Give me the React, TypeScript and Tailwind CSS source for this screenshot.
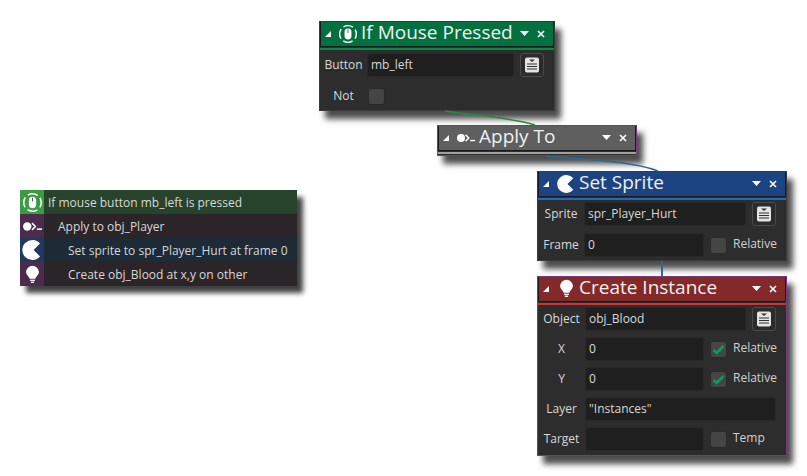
import React from 'react';

const MouseIcon = ({ size = 20 }: { size?: number }) => (
    <svg width={size} height={size} viewBox="0 0 22 22" fill="none" className="shrink-0">
        <circle cx="11" cy="11" r="9.2" stroke="white" strokeWidth="1.6" strokeDasharray="10.9 3.55" strokeDashoffset="5.45" />
        <rect x="7.2" y="5" width="7.6" height="12" rx="3.8" fill="white" />
        <rect x="10.5" y="6" width="1" height="4" fill="#555" />
    </svg>
);

const ApplyIcon = ({ size = 20 }: { size?: number }) => (
    <svg width={size} height={size} viewBox="0 0 22 22" fill="none" className="shrink-0">
        <circle cx="5.5" cy="11" r="4.4" fill="white" />
        <path d="M10.5 7.5 L14 11 L10.5 14.5" stroke="white" strokeWidth="1.6" />
        <rect x="15.5" y="13" width="5.5" height="1.6" fill="white" />
    </svg>
);

const PacIcon = ({ size = 20 }: { size?: number }) => (
    <svg width={size} height={size} viewBox="0 0 22 22" className="shrink-0">
        <path d="M19 4.6 A10 10 0 1 0 19 17.4 L12.6 11 Z" fill="white" />
    </svg>
);

const BulbIcon = ({ size = 20 }: { size?: number }) => (
    <svg width={size} height={size} viewBox="0 0 22 22" className="shrink-0">
        <path d="M11 1 A7.4 7.4 0 0 1 18.4 8.4 C18.4 11.4 15.2 13 14.2 16 L7.8 16 C6.8 13 3.6 11.4 3.6 8.4 A7.4 7.4 0 0 1 11 1 Z" fill="white" />
        <rect x="8.2" y="17" width="5.6" height="1.4" fill="white" />
        <rect x="9" y="19" width="4" height="1.8" rx="0.9" fill="white" />
    </svg>
);

const ListIcon = () => (
    <svg width="16" height="16" viewBox="0 0 16 16">
        <rect x="1" y="0.5" width="14" height="15" rx="2" fill="#e4e4e4" />
        <path d="M5 2.5 H11 L8 5 Z" fill="#333" />
        <rect x="3" y="6.5" width="10" height="1" fill="#333" />
        <rect x="3" y="9" width="10" height="1" fill="#333" />
        <rect x="3" y="11.5" width="10" height="1" fill="#333" />
    </svg>
);

const Input = ({ value = '', className = '' }: { value?: string; className?: string }) => (
    <div className={`h-6 flex-1 bg-[#1f1f1f] border border-[#282828] rounded-[3px] pl-[3px] text-[12px] leading-[22px] text-[#d8d8d8] ${className}`}>{value}</div>
);

const ListButton = () => (
    <div className="w-6 h-6 ml-1.5 shrink-0 rounded-[3px] border border-[#4a4a4a] bg-[#2b2b2b] flex items-center justify-center"><ListIcon /></div>
);

const Check = ({ on = false }: { on?: boolean }) => (
    <div className="w-[17px] h-[17px] shrink-0 rounded-[3px] border border-[#2a2a2a] bg-[#454545] flex items-center justify-center">
        {on && (
            <svg width="13" height="11" viewBox="0 0 13 11" fill="none">
                <path d="M1.5 6 L4.8 9 L11.5 2" stroke="#0c9c5c" strokeWidth="2.6" />
            </svg>
        )}
    </div>
);

const Label = ({ children, className = 'w-[46px]' }: { children: React.ReactNode; className?: string }) => (
    <div className={`text-[12px] text-center text-[#d8d8d8] shrink-0 whitespace-nowrap ${className}`}>{children}</div>
);

const CheckField = ({ on, text }: { on?: boolean; text: string }) => (
    <div className="flex items-center ml-1.5 w-[66px] shrink-0">
        <Check on={on} />
        <span className="ml-1.5 text-[12px] text-[#d0d0d0] -mt-[3px]">{text}</span>
    </div>
);

const NodeHeader = ({ icon, title, bg, strip }: { icon: React.ReactNode; title: string; bg: string; strip: string }) => (
    <div>
        <div className={`h-[25px] flex items-center pb-px border-x border-b border-[#1a1a1a] ${bg}`}>
            <svg width="8" height="8" viewBox="0 0 8 8" className="ml-[3px] mr-1.5 shrink-0"><path d="M7 1 V7 H1 Z" fill="white" /></svg>
            <div className="w-5 flex items-center justify-center shrink-0">{icon}</div>
            <span className="ml-[3px] -mt-[3px] text-[19px] leading-6 text-[#f0f0f0] whitespace-nowrap">{title}</span>
            <div className="ml-auto flex items-center pr-2">
                <svg width="9" height="5" viewBox="0 0 9 5"><path d="M0 0 H9 L4.5 5 Z" fill="white" /></svg>
                <svg width="8" height="8" viewBox="0 0 8 8" className="ml-2"><path d="M1 1 L7 7 M7 1 L1 7" stroke="white" strokeWidth="1.6" /></svg>
            </div>
        </div>
        <div className={`h-[2px] mt-px ${strip}`} />
    </div>
);

const Node = ({ className, children }: { className: string; children: React.ReactNode }) => (
    <div className={`absolute bg-[#2d2d2d] border shadow-[6px_8px_6px_rgba(0,0,0,0.7)] ${className}`}>{children}</div>
);

const rows = [
    { icon: <MouseIcon size={21} />, iconBg: 'bg-[#3c9a42]', bg: 'bg-[#27432b]', text: 'If mouse button mb_left is pressed', pad: 'pl-1' },
    { icon: <ApplyIcon size={21} />, iconBg: 'bg-[#4b2c4c]', bg: 'bg-[#2b2429]', text: 'Apply to obj_Player', pad: 'pl-3.5' },
    { icon: <PacIcon size={22} />, iconBg: 'bg-[#1f3a5c]', bg: 'bg-[#1e2a36]', text: 'Set sprite to spr_Player_Hurt at frame 0', pad: 'pl-6' },
    { icon: <BulbIcon size={19} />, iconBg: 'bg-[#4b2c4c]', bg: 'bg-[#2b2429]', text: 'Create obj_Blood at x,y on other', pad: 'pl-6' },
];

export default function App() {
    return (
        <div className="relative w-[807px] h-[476px] bg-white overflow-hidden" style={{ fontFamily: '"Open Sans", "Noto Sans", sans-serif' }}>
            {/* action summary */}
            <div className="absolute left-5 top-[190px] w-[277px] shadow-[6px_7px_5px_rgba(0,0,0,0.75)]">
                {rows.map((r) => (
                    <div key={r.text} className={`h-6 flex items-center ${r.bg}`}>
                        <div className={`w-6 h-6 flex items-center justify-center shrink-0 ${r.iconBg}`}>{r.icon}</div>
                        <span className={`text-[12px] pt-px text-[#d8d8d8] whitespace-nowrap ${r.pad}`}>{r.text}</span>
                    </div>
                ))}
            </div>

            <Node className="left-[319px] top-[21px] w-[236px] h-[90px] border-[#3a3a3a]">
                <NodeHeader icon={<MouseIcon />} title="If Mouse Pressed" bg="bg-[#03703f]" strip="bg-[#0b8a4c]" />
                <div className="flex items-center mt-[3px] pr-2.5">
                    <Label className="w-[47px]">Button</Label>
                    <Input value="mb_left" />
                    <ListButton />
                </div>
                <div className="flex items-center mt-2.5">
                    <Label className="w-[47px]">Not</Label>
                    <div className="ml-px"><Check /></div>
                </div>
            </Node>

            <Node className="left-[437px] top-[125px] w-[200px] h-[31px] border-[#7a3a7c]">
                <NodeHeader icon={<ApplyIcon />} title="Apply To" bg="bg-[#5f5f5f]" strip="bg-[#a0a0a0]" />
            </Node>

            <Node className="left-[537px] top-[171px] w-[250px] h-[90px] border-[#3a3a3a]">
                <NodeHeader icon={<PacIcon />} title="Set Sprite" bg="bg-[#1c4480]" strip="bg-[#2268b8]" />
                <div className="flex items-center mt-0.5 pr-2.5">
                    <Label>Sprite</Label>
                    <Input value="spr_Player_Hurt" />
                    <ListButton />
                </div>
                <div className="flex items-center mt-[7px] pr-2.5">
                    <Label>Frame</Label>
                    <Input value="0" />
                    <CheckField text="Relative" />
                </div>
            </Node>

            <Node className="left-[537px] top-[276px] w-[250px] h-[180px] border-[#7a3a7c]">
                <NodeHeader icon={<BulbIcon size={19} />} title="Create Instance" bg="bg-[#832929]" strip="bg-[#d03232]" />
                <div className="flex flex-col gap-1.5 mt-0.5 pr-2.5">
                    <div className="flex items-center">
                        <Label className="w-[47px]">Object</Label>
                        <Input value="obj_Blood" />
                        <ListButton />
                    </div>
                    <div className="flex items-center">
                        <Label className="w-[47px]">X</Label>
                        <Input value="0" />
                        <CheckField on text="Relative" />
                    </div>
                    <div className="flex items-center">
                        <Label className="w-[47px]">Y</Label>
                        <Input value="0" />
                        <CheckField on text="Relative" />
                    </div>
                    <div className="flex items-center">
                        <Label className="w-[47px]">Layer</Label>
                        <Input value={'"Instances"'} />
                    </div>
                    <div className="flex items-center">
                        <Label className="w-[47px]">Target</Label>
                        <Input />
                        <CheckField text="Temp" />
                    </div>
                </div>
            </Node>

            {/* connectors */}
            <svg width="807" height="476" className="absolute left-0 top-0 pointer-events-none" fill="none">
                <path d="M445 111 C475 116 510 117 535 125" stroke="#2a8a3c" strokeWidth="1.5" />
                <path d="M545 156 C590 160 630 161 658 171" stroke="#2a6a90" strokeWidth="1.5" />
                <path d="M662 261 V276" stroke="#2a6a90" strokeWidth="2" />
            </svg>
        </div>
    );
}
